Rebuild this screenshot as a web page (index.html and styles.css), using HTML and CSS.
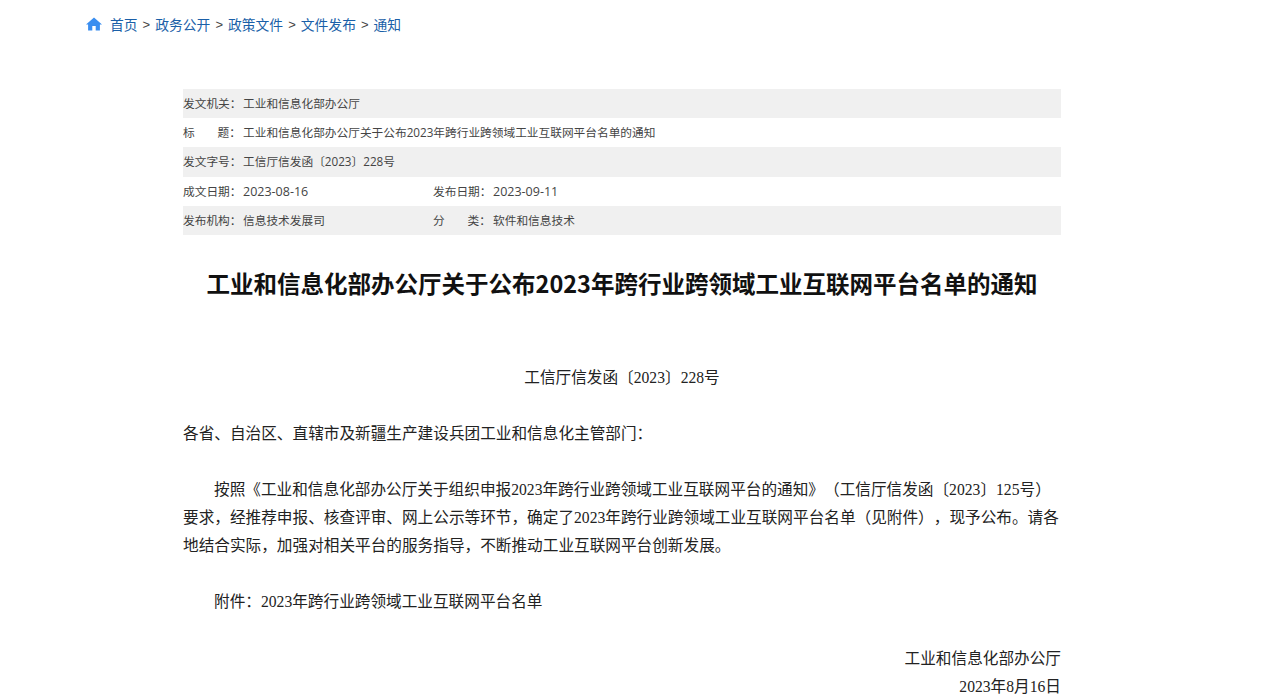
FILE: index.html
```html
<!DOCTYPE html>
<html lang="zh-CN">
<head>
<meta charset="utf-8">
<title>工业和信息化部办公厅关于公布2023年跨行业跨领域工业互联网平台名单的通知</title>
<link rel="stylesheet" href="styles.css">
</head>
<body>
<nav class="crumbs">
  <svg class="home" viewBox="0 0 16 14" width="16" height="14"><path d="M8 0.5 L16 7.6 L13.9 7.6 L13.9 13.5 L9.7 13.5 L9.7 9 L6.3 9 L6.3 13.5 L2.1 13.5 L2.1 7.6 L0 7.6 Z"/></svg>
  <a>首页</a><span class="sep">&gt;</span><a>政务公开</a><span class="sep">&gt;</span><a>政策文件</a><span class="sep">&gt;</span><a>文件发布</a><span class="sep">&gt;</span><a>通知</a>
</nav>
<main class="article">
  <section class="meta">
    <div class="row shade"><span class="key">发文机关：</span><span>工业和信息化部办公厅</span></div>
    <div class="row"><span class="key split"><span>标</span><span>题：</span></span><span>工业和信息化部办公厅关于公布2023年跨行业跨领域工业互联网平台名单的通知</span></div>
    <div class="row shade"><span class="key">发文字号：</span><span>工信厅信发函〔2023〕228号</span></div>
    <div class="row"><span class="key">成文日期：</span><span class="val date">2023-08-16</span><span class="key">发布日期：</span><span class="date">2023-09-11</span></div>
    <div class="row shade"><span class="key">发布机构：</span><span class="val">信息技术发展司</span><span class="key split"><span>分</span><span>类：</span></span><span>软件和信息技术</span></div>
  </section>
  <h1>工业和信息化部办公厅关于公布2023年跨行业跨领域工业互联网平台名单的通知</h1>
  <section class="body">
    <p class="center">工信厅信发函〔2023〕228号</p>
    <p>各省、自治区、直辖市及新疆生产建设兵团工业和信息化主管部门：</p>
    <p class="indent">按照《工业和信息化部办公厅关于组织申报2023年跨行业跨领域工业互联网平台的通知》（工信厅信发函〔2023〕125号）要求，经推荐申报、核查评审、网上公示等环节，确定了2023年跨行业跨领域工业互联网平台名单（见附件），现予公布。请各地结合实际，加强对相关平台的服务指导，不断推动工业互联网平台创新发展。</p>
    <p class="indent">附件：2023年跨行业跨领域工业互联网平台名单</p>
    <p class="right">工业和信息化部办公厅<br>2023年8月16日</p>
  </section>
</main>
</body>
</html>
```
FILE: styles.css
```css
html, body { margin: 0; padding: 0; background: #fff; }
body { font-family: "Noto Sans CJK SC", sans-serif; color: #222; overflow: hidden; height: 699px; text-spacing-trim: space-all; }
.crumbs { display: flex; align-items: center; height: 20px; padding: 14px 0 0 86px; font-size: 13.8px; color: #1a5fa8; }
.home { fill: #3a8ef0; margin-right: 8px; }
.sep { width: 17.6px; flex: none; text-align: center; color: #444; font-family: "Liberation Sans", sans-serif; font-size: 13px; }
.article { width: 878px; margin: 55px 0 0 183px; }
.meta { font-family: "Open Sans", "Noto Sans CJK SC", sans-serif; font-size: 11.7px; line-height: 28px; color: #444; }
.row { display: flex; align-items: baseline; box-sizing: border-box; height: 29.2px; }
.shade { background: #f0f0f0; }
.key { width: 60px; flex: none; white-space: nowrap; }
.split { display: flex; justify-content: space-between; box-sizing: border-box; padding-right: 2px; }
.val { width: 190px; flex: none; }
.date { font-size: 12.5px; }
h1 { margin: 30px 0 0; font-size: 23.5px; line-height: 36px; text-align: center; color: #111; font-weight: 700; }
.body { margin-top: 63px; font-family: "Liberation Serif", "Noto Sans CJK SC", serif; font-size: 15.65px; line-height: 28.1px; color: #222; }
.body p { margin: 0 0 28px; }
.body .center { text-align: center; }
.body .indent { text-indent: 31px; }
.body .right { text-align: right; }
```
